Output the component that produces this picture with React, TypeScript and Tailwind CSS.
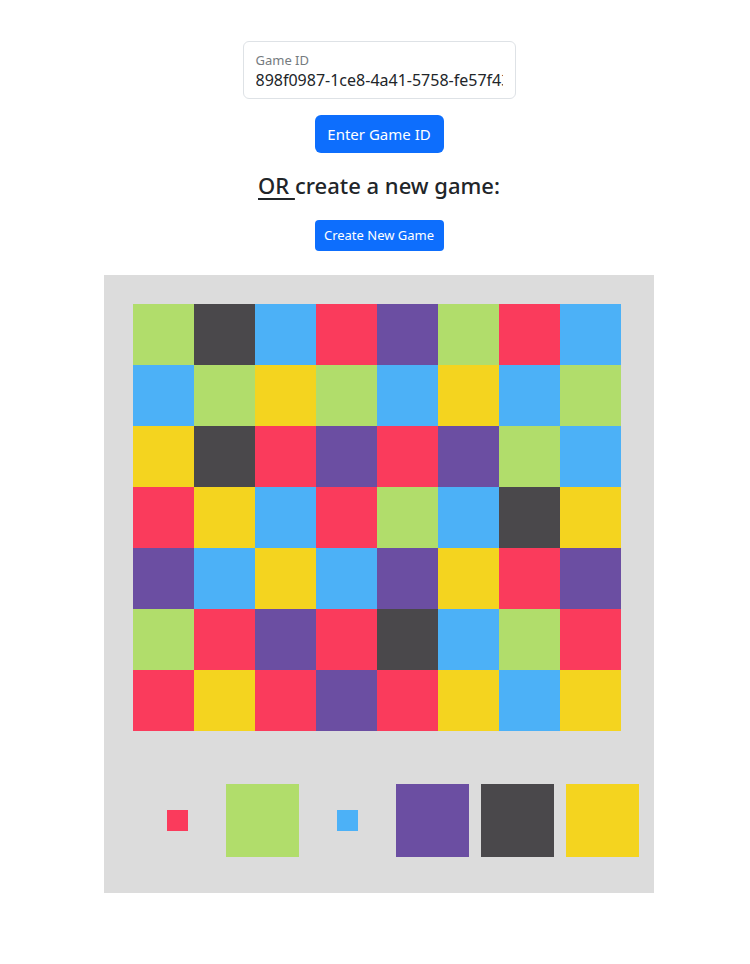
const C: Record<string, string> = {
  g: 'bg-[#b1dd6b]',
  d: 'bg-[#4a484b]',
  b: 'bg-[#4cb1f7]',
  r: 'bg-[#fa3b5c]',
  p: 'bg-[#6b4ea2]',
  y: 'bg-[#f4d41f]',
};

const BOARD = [
  'gdbrpgrb',
  'bgygbybg',
  'ydrprpgb',
  'rybrgbdy',
  'pbybpyrp',
  'grprdbgr',
  'ryrpryby',
];

const PALETTE: { c: string; small?: boolean }[] = [
  { c: 'r', small: true },
  { c: 'g' },
  { c: 'b', small: true },
  { c: 'p' },
  { c: 'd' },
  { c: 'y' },
];

export default function App() {
  return (
    <div
      className="min-h-[964px] bg-white text-[#212529] pl-[8px]"
      style={{ fontFamily: '"Noto Sans", "Open Sans", sans-serif' }}
    >
      <div className="flex flex-col items-center pt-[41px]">
        {/* game id input */}
        <label className="w-[273px] h-[58px] border border-[#dee2e6] rounded-[6px] px-[12px] pt-[9px] flex flex-col">
          <span className="text-[13px] leading-[18px] text-[#757b80]">Game ID</span>
          <input
            readOnly
            value="898f0987-1ce8-4a41-5758-fe57f43a"
            className="w-full text-[16px] leading-[22px] h-[22px] p-0 bg-transparent outline-none text-[#212529]"
            style={{ fontFamily: 'inherit' }}
          />
        </label>

        <button className="mt-[16px] h-[38px] w-[129px] rounded-[6px] bg-[#0d6efd] text-white text-[15px]">
          Enter Game ID
        </button>

        <h4 className="mt-[17px] text-[22px] leading-[30px] font-medium">
          <span className="underline underline-offset-[4px]">OR </span>create a new game:
        </h4>

        <button className="mt-[20px] h-[31px] w-[129px] rounded-[4px] bg-[#0d6efd] text-white text-[13px]">
          Create New Game
        </button>

        {/* board */}
        <div className="mt-[24px] w-[550px] h-[618px] bg-[#dcdcdc] pl-[29px] pt-[29px]">
          <div className="grid grid-cols-8 w-[488px]">
            {BOARD.flatMap((row, ri) =>
              row.split('').map((k, ci) => (
                <div key={`${ri}-${ci}`} className={`h-[61px] ${C[k]}`} />
              ))
            )}
          </div>

          <div className="mt-[47px] ml-[2px] flex items-center">
            {PALETTE.map((s, i) => (
              <div key={i} className="w-[85px] h-[85px] flex items-center justify-center">
                <div className={`${s.small ? 'w-[21px] h-[21px]' : 'w-[73px] h-[73px]'} ${C[s.c]}`} />
              </div>
            ))}
          </div>
        </div>
      </div>
    </div>
  );
}
